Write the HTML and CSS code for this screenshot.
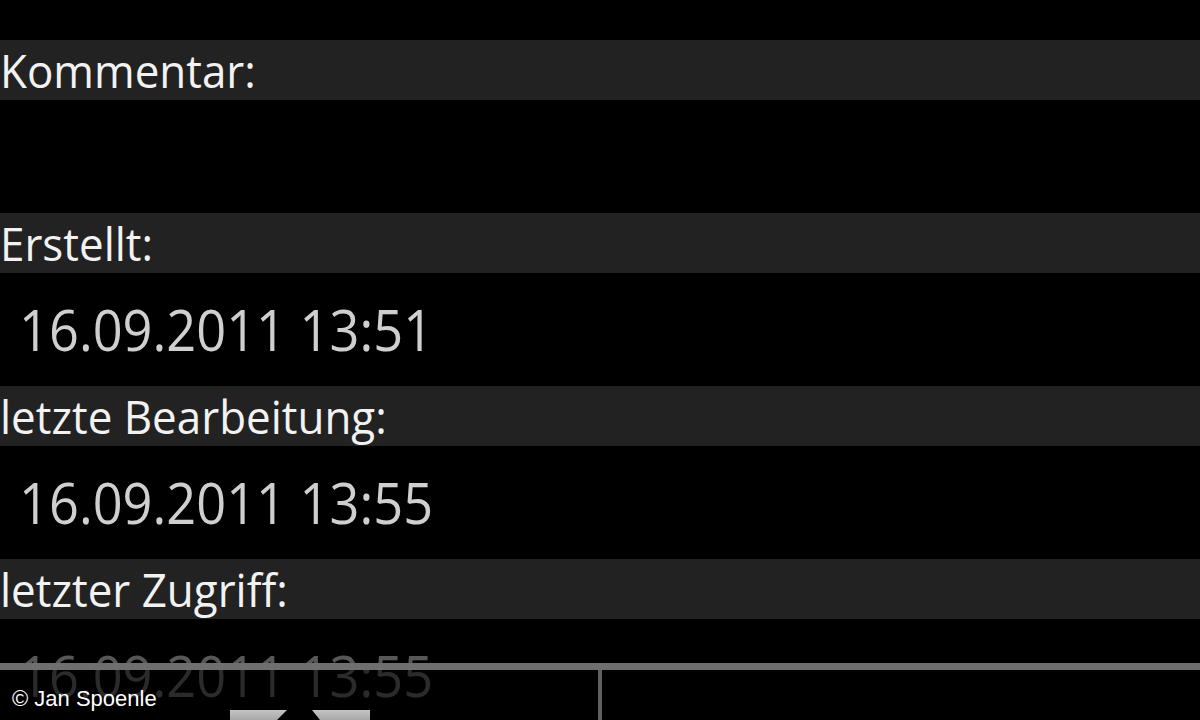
FILE: index.html
```html
<!DOCTYPE html>
<html lang="de">
<head>
<meta charset="utf-8">
<title>Details</title>
<link rel="stylesheet" href="styles.css">
</head>
<body>
<main class="screen">
  <section class="field">
    <div class="label"><span class="txt">Kommentar:</span></div>
    <div class="value"></div>
  </section>
  <section class="field">
    <div class="label"><span class="txt">Erstellt:</span></div>
    <div class="value"><span class="txt">16.09.2011 13:51</span></div>
  </section>
  <section class="field">
    <div class="label"><span class="txt">letzte Bearbeitung:</span></div>
    <div class="value"><span class="txt">16.09.2011 13:55</span></div>
  </section>
  <section class="field">
    <div class="label"><span class="txt">letzter Zugriff:</span></div>
    <div class="value value-faded"><span class="txt">16.09.2011 13:55</span></div>
  </section>
</main>
<div class="toolbar">
  <div class="toolbar-btn">
    <svg class="tool-icon" width="200" height="12" viewBox="0 0 200 12">
      <defs>
        <linearGradient id="g" x1="0" y1="0" x2="0" y2="1">
          <stop offset="0" stop-color="#c4c4c4"/>
          <stop offset="1" stop-color="#a8a8a8"/>
        </linearGradient>
      </defs>
      <polygon points="50,2 107,2 97,12 50,12" fill="url(#g)"/>
      <polygon points="132,2 190,2 190,12 140,12" fill="url(#g)"/>
    </svg>
  </div>
  <div class="toolbar-sep"></div>
  <div class="toolbar-btn"></div>
</div>
<div class="credit">© Jan Spoenle</div>
</body>
</html>
```

FILE: styles.css
```css
html, body {
  margin: 0;
  padding: 0;
  background: #000;
  width: 1200px;
  height: 720px;
  overflow: hidden;
}

.screen {
  padding-top: 40px;
  font-family: "Open Sans", "DejaVu Sans", sans-serif;
}

.field {
  display: flex;
  flex-direction: column;
}

.txt {
  display: inline-block;
  transform-origin: left center;
  white-space: nowrap;
}

.label {
  height: 60px;
  line-height: 60px;
  background: #222222;
  color: #f2f2f2;
  font-size: 46px;
  padding-left: 0;
}

.label .txt {
  transform: scaleX(0.955);
}

.value {
  height: 113px;
  line-height: 113px;
  color: #cfcfcf;
  font-size: 56px;
  padding-left: 19px;
}

.value .txt {
  transform: scaleX(0.935);
}

.value-faded {
  color: #575757;
}

.toolbar {
  position: absolute;
  left: 0;
  top: 663px;
  width: 1200px;
  height: 57px;
  border-top: 7px solid #6f6f6f;
  box-sizing: border-box;
  background: rgba(0, 0, 0, 0.5);
  display: flex;
}

.toolbar-btn {
  flex: 1;
  position: relative;
  overflow: hidden;
}

.tool-icon {
  position: absolute;
  left: 180px;
  top: 38px;
}

.toolbar-sep {
  width: 4px;
  background: #5f5f5f;
}

.credit {
  position: absolute;
  left: 12px;
  top: 685px;
  font-family: "Liberation Sans", Arial, sans-serif;
  font-size: 22px;
  color: #ffffff;
  line-height: 28px;
}
```
